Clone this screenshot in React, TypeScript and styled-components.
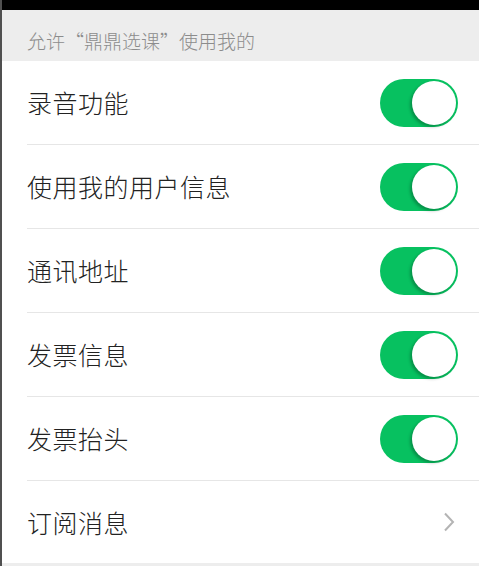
import React from "react";
import styled, { createGlobalStyle } from "styled-components";

const Global = createGlobalStyle`
  html, body { margin: 0; padding: 0; background: #ffffff; }
  body { font-family: "Noto Sans CJK SC", "Noto Sans", sans-serif; }
`;

const Page = styled.div`
  height: 566px;
  border-left: 2px solid #505050;
  display: flex;
  flex-direction: column;
  background: #ffffff;
  box-sizing: border-box;
  overflow: hidden;
`;

const StatusBar = styled.div`
  height: 10px;
  background: #000000;
  margin-left: -2px;
`;

const SectionHeader = styled.div`
  height: 51px;
  background: #ededed;
  display: flex;
  align-items: flex-end;
  padding: 0 0 8px 25px;
  box-sizing: border-box;
  font-size: 19px;
  line-height: 25px;
  color: #8c8c8c;
  font-weight: 300;
`;

const List = styled.div`
  display: flex;
  flex-direction: column;
`;

const Row = styled.div<{ $last?: boolean }>`
  height: ${(p) => (p.$last ? 82 : 83)}px;
  margin-left: 25px;
  padding-right: 21px;
  display: flex;
  align-items: center;
  justify-content: space-between;
  border-bottom: ${(p) => (p.$last ? "none" : "1px solid #e6e6e6")};
`;

const Label = styled.span`
  font-size: 25px;
  color: #222222;
  letter-spacing: 0.5px;
  font-weight: 300;
  margin-top: -1px;
`;

const Track = styled.div<{ $on: boolean }>`
  width: 78px;
  height: 48px;
  border-radius: 24px;
  background: ${(p) => (p.$on ? "#07c160" : "#e5e5e5")};
  padding: 2px;
  box-sizing: border-box;
  display: flex;
  justify-content: ${(p) => (p.$on ? "flex-end" : "flex-start")};
`;

const Knob = styled.div`
  width: 44px;
  height: 44px;
  border-radius: 50%;
  background: #ffffff;
  box-shadow: -2px 2px 3px rgba(0, 0, 0, 0.25);
`;

const Chevron = styled.svg`
  width: 12px;
  height: 20px;
  margin-right: 3px;
`;

const Footer = styled.div`
  flex: 1;
  background: #ededed;
`;

const items: { label: string; toggle: boolean }[] = [
  { label: "录音功能", toggle: true },
  { label: "使用我的用户信息", toggle: true },
  { label: "通讯地址", toggle: true },
  { label: "发票信息", toggle: true },
  { label: "发票抬头", toggle: true },
  { label: "订阅消息", toggle: false },
];

export default function App() {
  return (
    <>
      <Global />
      <Page>
        <StatusBar />
        <SectionHeader>允许“鼎鼎选课”使用我的</SectionHeader>
        <List>
          {items.map((it, i) => (
            <Row key={it.label} $last={i === items.length - 1}>
              <Label>{it.label}</Label>
              {it.toggle ? (
                <Track $on>
                  <Knob />
                </Track>
              ) : (
                <Chevron viewBox="0 0 12 20">
                  <path d="M2 1.5 L10 10 L2 18.5" fill="none" stroke="#b4b4b4" strokeWidth="2" />
                </Chevron>
              )}
            </Row>
          ))}
        </List>
        <Footer />
      </Page>
    </>
  );
}
